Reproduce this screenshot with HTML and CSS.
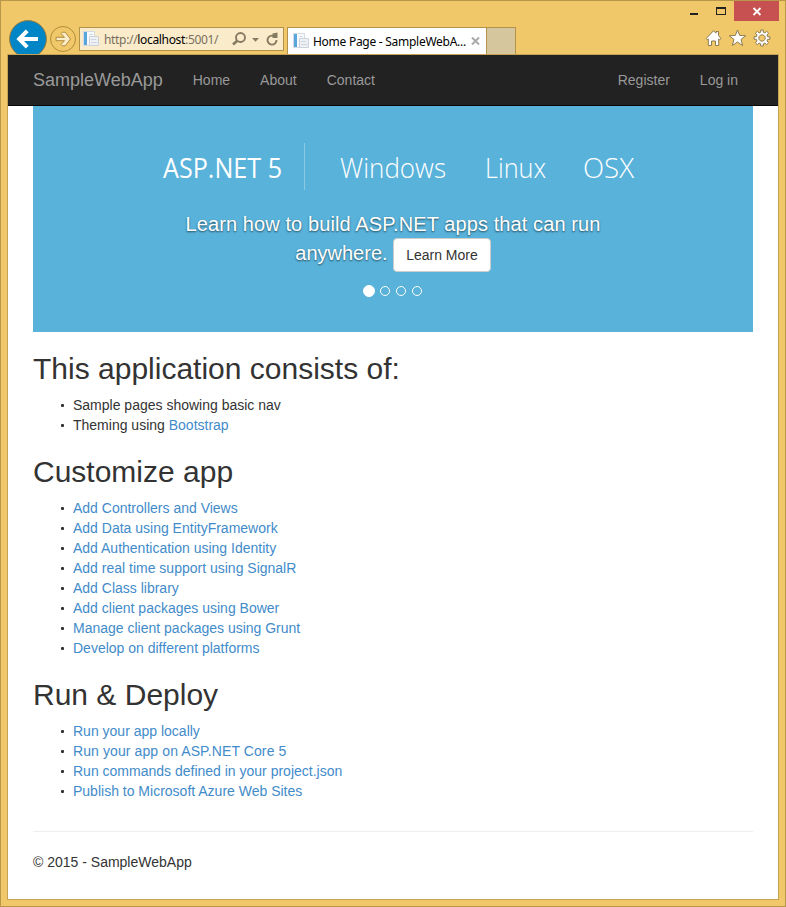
FILE: index.html
```html
<!DOCTYPE html>
<html lang="en">
<head>
<meta charset="utf-8">
<title>Home Page - SampleWebApp</title>
<link rel="stylesheet" href="styles.css">
</head>
<body>
<div class="window">
  <div class="window-controls">
    <svg width="92" height="20" viewBox="0 0 92 20">
      <rect x="3" y="12" width="8" height="2" fill="#222"/>
      <path d="M29 6h10v8H29z M30 8v5h8V8z" fill="#222" fill-rule="evenodd"/>
      <rect x="47" y="0" width="45" height="20" fill="#c75050"/>
      <path d="M66.500 7l7 7m0-7l-7 7" stroke="#fff" stroke-width="1.800"/>
    </svg>
  </div>
  <div class="toolbar">
    <svg class="back" width="38" height="34" viewBox="0 0 38 34">
      <circle cx="19" cy="19" r="18.400" fill="#0085c7" stroke="#947a3f"/>
      <path d="M10.500 19H29M18.200 10.800L10.200 19l8 8.200" fill="none" stroke="#fff" stroke-width="4"/>
    </svg>
    <svg class="forward" width="28" height="28" viewBox="0 0 28 28">
      <circle cx="14" cy="14" r="12.500" fill="none" stroke="#b08c3b"/>
      <path d="M7 12.300h8.500l-3.400-3.700 1.300-1.400h2.800l5.300 6.800-5.300 6.800h-2.800l-1.300-1.400 3.400-3.700H7z" fill="#fbeccb" stroke="#b08c3b"/>
    </svg>
    <div class="address">
      <svg class="page-icon" width="16" height="16" viewBox="0 0 16 16">
        <rect x=".5" y=".5" width="11" height="14" fill="#f7f9fc" stroke="#d5dbe4"/>
        <rect x="1" y="1" width="3" height="13" fill="#58a6dc"/>
        <path d="M6.500 3.500h3" stroke="#c9d5e2"/>
        <path d="M6.500 5.500h9v9h-9z" fill="#eef0f4" stroke="#ccd2dc"/>
        <path d="M8 8.500h5M8 11.500h6" stroke="#cdd5df"/>
      </svg>
      <span class="url">http://<b>localhost</b>:5001/</span>
      <svg class="address-tools" width="48" height="16" viewBox="0 0 48 16">
        <g fill="none" stroke="#857b61"><circle cx="9.500" cy="6.500" r="4.500" stroke-width="1.900"/><path d="M6.300 9.700L2 13.500" stroke-width="2.600"/></g>
        <path d="M21 7h7l-3.500 3.800z" fill="#857b61"/>
        <path d="M43 5.100A4.500 4.500 0 1 0 45.500 9" fill="none" stroke="#857b61" stroke-width="1.900"/>
        <path d="M41.500 2.500l5-1V7h-5z" fill="#857b61"/>
      </svg>
    </div>
    <div class="tab">
      <svg class="page-icon" width="16" height="16" viewBox="0 0 16 16">
        <rect x=".5" y=".5" width="11" height="14" fill="#f7f9fc" stroke="#d5dbe4"/>
        <rect x="1" y="1" width="3" height="13" fill="#58a6dc"/>
        <path d="M6.500 3.500h3" stroke="#c9d5e2"/>
        <path d="M6.500 5.500h9v9h-9z" fill="#eef0f4" stroke="#ccd2dc"/>
        <path d="M8 8.500h5M8 11.500h6" stroke="#cdd5df"/>
      </svg>
      <span class="tab-title">Home Page - SampleWebA...</span>
      <svg class="tab-close" width="9" height="8" viewBox="0 0 9 8"><path d="M1 .5l7 7m0-7l-7 7" stroke="#a9a9a9" stroke-width="2"/></svg>
    </div>
    <div class="new-tab"></div>
    <svg class="commands" width="66" height="18" viewBox="0 0 66 18">
      <g fill="#fff" stroke="#8d7b51">
        <path d="M1.200 9.500l7.300-7.800 2.500 2.500V2.500h2.500v4l2.500 3-1.300 1.200-1-.8v6.600h-3.200v-4.500h-4v4.500H3.300V9.900l-1 .8z"/>
        <path d="M32.500 1l2.200 5.400 6 .4-4.700 3.700 1.700 6-5.200-3.500-5.200 3.500 1.700-6-4.700-3.700 6-.4z"/>
        <path fill-rule="evenodd" d="M55.700 1h2.600v2.200l1.600.7 1.800-1.600 1.900 1.900L62 6l.6 1.700h2.300v2.600h-2.300L62 12l1.600 1.800-1.900 1.900-1.800-1.600-1.600.7V17h-2.600v-2.200l-1.600-.7-1.800 1.600-1.900-1.900L52 12l-.6-1.700h-2.300V7.700h2.300L52 6l-1.600-1.800 1.900-1.900 1.800 1.600 1.600-.7zM57 5.800a3.200 3.200 0 1 0 .01 0z"/>
      </g>
    </svg>
  </div>
  <div class="viewport">
    <nav class="navbar">
      <a class="brand">SampleWebApp</a><a>Home</a><a>About</a><a>Contact</a>
      <a class="push">Register</a><a>Log in</a>
    </nav>
    <main class="container">
      <section class="carousel">
        <svg class="banner" width="720" height="100" viewBox="0 0 720 100">
          <text class="strong" x="130" y="72" textLength="119" lengthAdjust="spacingAndGlyphs">ASP.NET 5</text>
          <path d="M271.500 37v47" stroke="#8bcae5"/>
          <text x="307" y="72" textLength="106" lengthAdjust="spacingAndGlyphs">Windows</text>
          <text x="452" y="72" textLength="61" lengthAdjust="spacingAndGlyphs">Linux</text>
          <text x="550" y="72" textLength="51" lengthAdjust="spacingAndGlyphs">OSX</text>
        </svg>
        <div class="caption"><span class="lead">Learn how to build ASP.NET apps that can run</span><br>anywhere. <a class="button">Learn More</a></div>
        <div class="indicators"><i class="active"></i><i></i><i></i><i></i></div>
      </section>
      <h2>This application consists of:</h2>
      <ul>
        <li>Sample pages showing basic nav</li>
        <li>Theming using <a>Bootstrap</a></li>
      </ul>
      <h2>Customize app</h2>
      <ul>
        <li><a>Add Controllers and Views</a></li>
        <li><a>Add Data using EntityFramework</a></li>
        <li><a>Add Authentication using Identity</a></li>
        <li><a>Add real time support using SignalR</a></li>
        <li><a>Add Class library</a></li>
        <li><a>Add client packages using Bower</a></li>
        <li><a>Manage client packages using Grunt</a></li>
        <li><a>Develop on different platforms</a></li>
      </ul>
      <h2>Run &amp; Deploy</h2>
      <ul>
        <li><a>Run your app locally</a></li>
        <li><a class="wide">Run your app on ASP.NET Core 5</a></li>
        <li><a>Run commands defined in your project.json</a></li>
        <li><a>Publish to Microsoft Azure Web Sites</a></li>
      </ul>
      <footer>© 2015 - SampleWebApp</footer>
    </main>
  </div>
</div>
</body>
</html>
```
FILE: styles.css
```css
* { box-sizing: border-box; }
body { margin: 0; font: 14px/20px "Liberation Sans", Arial, sans-serif; color: #333; overflow: hidden; }
svg { display: block; flex: none; }
.window { width: 786px; height: 907px; display: flex; flex-direction: column; background: #f0c869; border: 1px solid #b8974b; padding: 0 6px 6px; }
.window-controls { height: 20px; display: flex; justify-content: flex-end; }
.toolbar { height: 33px; display: flex; align-items: flex-start; padding-left: 2px; }
.back { margin-top: -1px; }
.forward { margin: 4px 0 0 2px; }
.address { display: flex; align-items: center; width: 205px; height: 24px; margin: 6px 0 0 2px; border: 1px solid #b3924a; background: #faebcb; padding: 0 3px; }
.url { width: 121px; margin: 2px 0 0 5px; font: 12px/20px "Noto Sans", sans-serif; color: #77705f; white-space: nowrap; letter-spacing: -0.33px; }
.url b { font-weight: 400; color: #000; }
.address-tools { margin-left: 6px; }
.tab { display: flex; align-items: center; width: 200px; height: 27px; margin: 6px 0 0 3px; padding-left: 5px; background: #fff; border: 1px solid #b3924a; border-bottom: 0; }
.tab-title { width: 154px; margin: 2px 0 0 4px; font: 12px/20px "Noto Sans", sans-serif; color: #000; white-space: nowrap; letter-spacing: -0.27px; }
.tab-close { margin-left: 4px; }
.new-tab { width: 29px; height: 27px; margin-top: 6px; background: #d6c69d; border: 1px solid #b3924a; border-width: 1px 1px 0 0; }
.commands { margin: 8px 8px 0 auto; }
.viewport { flex: 1; min-height: 0; border: 1px solid #c5a254; background: #fff; }
.navbar { height: 51px; background: #222; border-bottom: 1px solid #080808; padding: 0 25px; display: flex; gap: 30px; line-height: 50px; color: #999; }
.brand { font-size: 18px; }
.navbar .push { margin-left: auto; }
.navbar a:last-child { margin-right: 15px; }
.container { width: 720px; margin: 0 25px; }
.carousel { height: 226px; background: #58b2da; color: #fff; }
.banner text { font: 300 28px "Open Sans", sans-serif; fill: #fff; }
.banner .strong { font-weight: 400; }
.caption { width: 432px; margin: 0 auto; padding-top: 4px; font-size: 20px; line-height: 28px; text-align: center; white-space: nowrap; text-shadow: 0 1px 2px rgba(0,0,0,.6); }
.lead { letter-spacing: 0.1px; }
.button { display: inline-block; height: 34px; padding: 6px 12px; font-size: 14px; line-height: 20px; vertical-align: middle; background: #fff; border: 1px solid #ccc; border-radius: 4px; color: #333; text-shadow: none; }
.indicators { display: flex; justify-content: center; align-items: center; gap: 6px; height: 12px; margin-top: 13px; }
.indicators i { width: 10px; height: 10px; border: 1px solid #fff; border-radius: 50%; }
.indicators .active { width: 12px; height: 12px; margin: 0 -1px; background: #fff; }
h2 { margin: 20px 0 10px; font-size: 30px; line-height: 33px; font-weight: 400; }
ul { margin: 0 0 10px; padding: 0 0 0 28px; list-style: none; }
li { display: flex; align-items: center; white-space: pre; }
li::before { content: ""; width: 3px; height: 3px; margin: 1px 9px 0 0; border-radius: 1px; background: #333; }
li a { color: #428bca; }
.wide { letter-spacing: 0.1px; }
footer { margin-top: 30px; padding-top: 20px; border-top: 1px solid #eee; }
```
